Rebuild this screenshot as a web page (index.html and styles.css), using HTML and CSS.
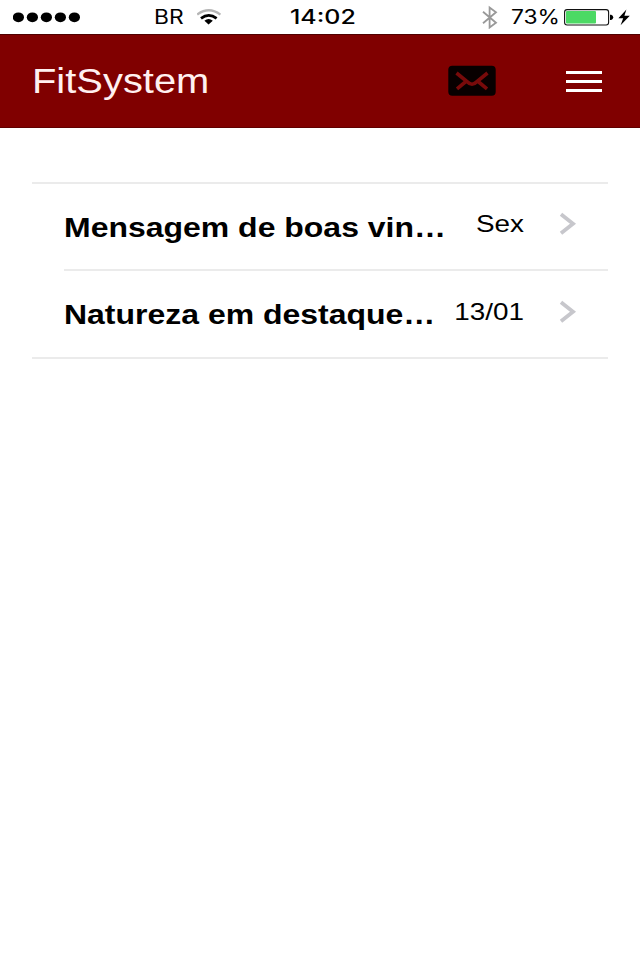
FILE: index.html
```html
<!DOCTYPE html>
<html lang="pt-BR">
<head>
    <meta charset="UTF-8">
    <meta name="viewport" content="width=device-width, initial-scale=1.0">
    <title>FitSystem</title>
    <link rel="stylesheet" href="styles.css">
</head>
<body>

<div class="status-bar">
    <svg class="signal" width="70" height="12" viewBox="0 0 70 12">
        <ellipse cx="5.4" cy="6.3" rx="5.6" ry="4.9"/>
        <ellipse cx="19.4" cy="6.3" rx="5.6" ry="4.9"/>
        <ellipse cx="33.4" cy="6.3" rx="5.6" ry="4.9"/>
        <ellipse cx="47.4" cy="6.3" rx="5.6" ry="4.9"/>
        <ellipse cx="61.4" cy="6.3" rx="5.6" ry="4.9"/>
    </svg>
    <span class="carrier"><span class="wide">BR</span></span>
    <svg class="wifi" width="26" height="18" viewBox="0 0 26 18" fill="none">
        <path d="M0.2 6.6Q11.8 -2 23.4 6.6" stroke="#b5b5b5" stroke-width="2.3"/>
        <path d="M4 10.4Q11.8 4.2 19.6 10.4" stroke="#000" stroke-width="2.7"/>
        <path d="M7.4 12.8Q11.6 9.4 15.8 12.8L11.6 16.6Z" fill="#000"/>
    </svg>
    <span class="time"><span class="wide">14:02</span></span>
    <svg class="bluetooth" width="18" height="24" viewBox="0 0 18 24" fill="none" stroke="#999" stroke-width="1.8">
        <path d="M2 6.7L15 17.7L8.6 22.5V2.5L15 7.3L2 18.3"/>
    </svg>
    <span class="percent"><span class="wide">73%</span></span>
    <svg class="battery" width="67" height="20" viewBox="0 0 67 20">
        <rect x="0.6" y="2.6" width="44" height="15.4" rx="2.5" fill="#fff" stroke="#111" stroke-width="1.1"/>
        <rect x="2" y="4" width="30" height="12.6" rx="1" fill="#4cd964"/>
        <path d="M46 7.7H47.2Q49.2 8.3 49.2 10.3T47.2 12.9H46Z"/>
        <path d="M62.4 2.4L54.4 11.2H59.2L56.6 18.2L65.8 8.8H60.4Z"/>
    </svg>
</div>

<header class="header">
    <h1 class="brand">FitSystem</h1>
    <svg class="mail" width="48" height="32" viewBox="0 0 48 32" fill="none">
        <rect x="0.3" y="0.8" width="47.4" height="30" rx="4" fill="#080000"/>
        <path d="M8.5 8L19 16.5Q24 22 29 16.5L39.5 8M9 23.8L18.5 16M39 23.8L29.5 16" stroke="#780a0a" stroke-width="3.6"/>
    </svg>
    <div class="menu">
        <span></span>
        <span></span>
        <span></span>
    </div>
</header>

<ul class="messages">
    <li class="message">
        <span class="subject">Mensagem de boas vin…</span>
        <span class="date">Sex</span>
        <svg class="arrow" width="18" height="24" viewBox="0 0 18 24"><path d="M2 2.2L14 11.7L2 21.2"/></svg>
    </li>
    <li class="message">
        <span class="subject">Natureza em destaque…</span>
        <span class="date">13/01</span>
        <svg class="arrow" width="18" height="24" viewBox="0 0 18 24"><path d="M2 2.2L14 11.7L2 21.2"/></svg>
    </li>
</ul>

</body>
</html>
```
FILE: styles.css
```css
* {
    box-sizing: border-box;
}
body {
    margin: 0;
    background: #fff;
    color: #000;
    font-family: "Liberation Sans", Arial, sans-serif;
}
svg {
    display: block;
    flex: none;
}
.status-bar {
    display: flex;
    align-items: center;
    height: 34px;
    padding-left: 13px;
    font-family: Inter, sans-serif;
    font-size: 19.5px;
    line-height: 34px;
    white-space: nowrap;
}
.wide {
    display: inline-block;
    padding-top: 1px;
    line-height: 33px;
    transform-origin: left center;
    transform: scaleX(1.17);
}
.carrier {
    width: 43px;
    margin-left: 71px;
}
.time {
    width: 191px;
    margin-left: 67px;
    font-weight: 500;
}
.time .wide {
    transform: scaleX(1.28);
}
.percent {
    width: 53px;
    margin-left: 12px;
}
.header {
    display: flex;
    align-items: center;
    height: 94px;
    padding: 0 38px 0 32px;
    background: #800000;
    border-top: 1px solid #500000;
    border-bottom: 1px solid #600000;
}
.brand {
    flex: 1;
    margin: 0;
    color: #fff0f0;
    font-size: 35px;
    font-weight: normal;
    line-height: 40px;
    transform-origin: left center;
    transform: scaleX(1.14);
}
.menu {
    display: flex;
    flex-direction: column;
    gap: 6px;
    width: 36px;
    margin-left: 70px;
}
.menu span {
    height: 3px;
    background: #fff;
}
.messages {
    margin: 54px 32px 0;
    padding: 0;
    list-style: none;
    border-top: 2px solid #ebebeb;
    border-bottom: 2px solid #ebebeb;
}
.message {
    display: flex;
    align-items: center;
    height: 85px;
    margin-left: 32px;
    padding-right: 31px;
}
.message + .message {
    height: 88px;
    border-top: 2px solid #ebebeb;
}
.subject {
    flex: 1;
    padding-top: 3px;
    font-size: 27px;
    font-weight: bold;
    white-space: nowrap;
    transform-origin: left center;
    transform: scaleX(1.184);
}
.date {
    width: 88px;
    padding-bottom: 5px;
    font-size: 24px;
    text-align: right;
    transform-origin: right center;
    transform: scaleX(1.16);
}
.arrow {
    margin: 0 0 5px 35px;
    fill: none;
    stroke: #c7c7cc;
    stroke-width: 3.8;
}
```
